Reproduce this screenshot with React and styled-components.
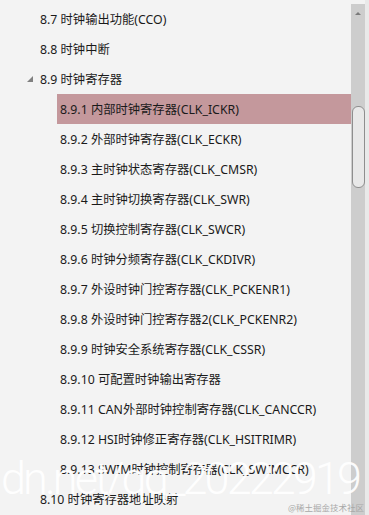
import React from "react";
import styled, { createGlobalStyle } from "styled-components";

const GlobalStyle = createGlobalStyle`
  html, body {
    margin: 0;
    padding: 0;
    background: #f3f3f3;
  }
  body {
    font-family: "Noto Sans", "Noto Sans CJK SC", sans-serif;
  }
`;

const items = [
  { level: 2, text: "8.7 时钟输出功能(CCO)" },
  { level: 2, text: "8.8 时钟中断" },
  { level: 2, text: "8.9 时钟寄存器", open: true },
  { level: 3, text: "8.9.1 内部时钟寄存器(CLK_ICKR)", active: true },
  { level: 3, text: "8.9.2 外部时钟寄存器(CLK_ECKR)" },
  { level: 3, text: "8.9.3 主时钟状态寄存器(CLK_CMSR)" },
  { level: 3, text: "8.9.4 主时钟切换寄存器(CLK_SWR)" },
  { level: 3, text: "8.9.5 切换控制寄存器(CLK_SWCR)" },
  { level: 3, text: "8.9.6 时钟分频寄存器(CLK_CKDIVR)" },
  { level: 3, text: "8.9.7 外设时钟门控寄存器(CLK_PCKENR1)" },
  { level: 3, text: "8.9.8 外设时钟门控寄存器2(CLK_PCKENR2)" },
  { level: 3, text: "8.9.9 时钟安全系统寄存器(CLK_CSSR)" },
  { level: 3, text: "8.9.10 可配置时钟输出寄存器" },
  { level: 3, text: "8.9.11 CAN外部时钟控制寄存器(CLK_CANCCR)" },
  { level: 3, text: "8.9.12 HSI时钟修正寄存器(CLK_HSITRIMR)" },
  { level: 3, text: "8.9.13 SWIM时钟控制寄存器(CLK_SWIMCCR)" },
  { level: 2, text: "8.10 时钟寄存器地址映射" },
];

const Page = styled.div`
  position: relative;
  display: flex;
  height: 515px;
  overflow: hidden;
`;

const List = styled.div`
  flex: 1;
  padding-top: 4px;
  min-width: 0;
`;

const Row = styled.div`
  position: relative;
  display: flex;
  align-items: center;
  height: 30px;
  margin-left: ${(p) => (p.$level === 3 ? "57px" : "0")};
  padding-left: ${(p) => (p.$level === 3 ? "3px" : "40px")};
  background: ${(p) => (p.$active ? "#c4989c" : "transparent")};
  color: #1a1a1a;
  font-size: 12.3px;
  white-space: nowrap;
`;

const Caret = styled.svg`
  position: absolute;
  left: 27px;
  top: 12px;
  width: 6px;
  height: 6px;
`;

const Scrollbar = styled.div`
  width: 14px;
  margin-top: 4px;
  background: #cdcdcd;
  display: flex;
  flex-direction: column;
  align-items: center;
`;

const Arrow = styled.div`
  margin-top: 8px;
  width: 0;
  height: 0;
  border-left: 3px solid transparent;
  border-right: 3px solid transparent;
  border-bottom: 3px solid #7a7a7a;
`;

const Thumb = styled.div`
  margin-top: 91px;
  width: 11px;
  height: 80px;
  border: 1px solid #8e8e8e;
  border-radius: 6px;
  background: #e8e8e8;
`;

const Edge = styled.div`
  width: 4px;
  background: #e9e9e9;
`;

const Watermark = styled.div`
  position: absolute;
  left: 1px;
  top: 452px;
  font-family: Roboto, "Liberation Sans", sans-serif;
  font-weight: 300;
  font-size: 45px;
  letter-spacing: -2.9px;
  color: rgba(255, 255, 255, 0.94);
  white-space: nowrap;
  pointer-events: none;
`;

const Credit = styled.div`
  position: absolute;
  right: 5px;
  bottom: 2px;
  font-size: 8.5px;
  color: #a8a8a8;
  font-family: "Noto Sans CJK SC", sans-serif;
`;

export default function App() {
  return (
    <>
      <GlobalStyle />
      <Page>
        <List>
          {items.map((it) => (
            <Row key={it.text} $level={it.level} $active={it.active}>
              {it.open && (
                <Caret viewBox="0 0 6 6">
                  <path d="M6 0 L6 6 L0 6 Z" fill="#808080" />
                </Caret>
              )}
              {it.text}
            </Row>
          ))}
        </List>
        <Scrollbar>
          <Arrow />
          <Thumb />
        </Scrollbar>
        <Edge />
        <Watermark>dn.net/qq_20222919</Watermark>
        <Credit>@稀土掘金技术社区</Credit>
      </Page>
    </>
  );
}
